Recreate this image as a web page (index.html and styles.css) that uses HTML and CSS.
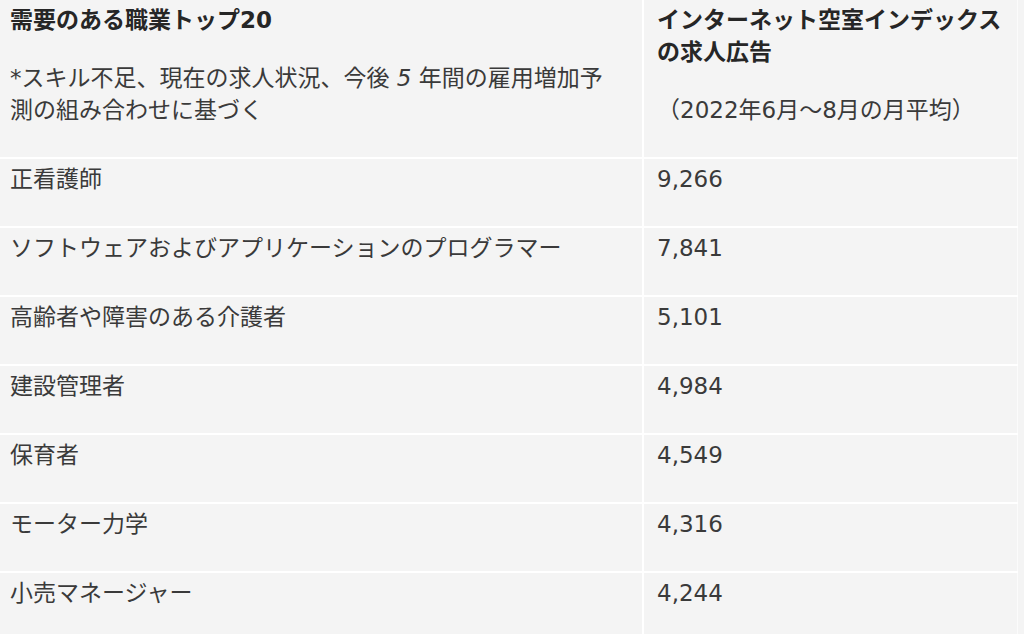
FILE: index.html
```html
<!DOCTYPE html>
<html lang="ja">
<head>
<meta charset="utf-8">
<title>需要のある職業トップ20</title>
<link rel="stylesheet" href="styles.css">
</head>
<body>
<table class="jobs">
  <colgroup><col class="col-job"><col class="col-ads"></colgroup>
  <thead>
    <tr>
      <th>
        <p class="title">需要のある職業トップ20</p>
        <p class="note">*スキル不足、現在の求人状況、今後 <em>5</em> 年間の雇用増加予測の組み合わせに基づく</p>
      </th>
      <th>
        <p class="title">インターネット空室インデックスの求人広告</p>
        <p class="note">（2022年6月～8月の月平均）</p>
      </th>
    </tr>
  </thead>
  <tbody>
    <tr><td><p>正看護師</p></td><td><p>9,266</p></td></tr>
    <tr><td><p>ソフトウェアおよびアプリケーションのプログラマー</p></td><td><p>7,841</p></td></tr>
    <tr><td><p>高齢者や障害のある介護者</p></td><td><p>5,101</p></td></tr>
    <tr><td><p>建設管理者</p></td><td><p>4,984</p></td></tr>
    <tr><td><p>保育者</p></td><td><p>4,549</p></td></tr>
    <tr><td><p>モーター力学</p></td><td><p>4,316</p></td></tr>
    <tr><td><p>小売マネージャー</p></td><td><p>4,244</p></td></tr>
  </tbody>
</table>
</body>
</html>
```
FILE: styles.css
```css
html, body {
  margin: 0;
  padding: 0;
  background: #f4f4f4;
}

body {
  font-family: "DejaVu Sans", "Noto Sans CJK JP", sans-serif;
  font-size: 23px;
  color: #3a3a3a;
}

.jobs {
  border-collapse: collapse;
  table-layout: fixed;
  width: 1018px;
  background: #f4f4f4;
}

.col-job { width: 643px; }

.jobs th,
.jobs td {
  text-align: left;
  vertical-align: top;
  font-weight: normal;
  padding: 4px 30px 0 10px;
  border-bottom: 2px solid #ffffff;
}

.jobs th + th,
.jobs td + td {
  border-left: 2px solid #ffffff;
  border-right: 1px solid #fbfbfb;
  padding-left: 13px;
  padding-right: 6px;
}

.jobs p {
  margin: 0 0 31px;
  line-height: 32px;
}

.jobs th .title {
  margin-bottom: 26px;
  font-weight: 700;
  color: #262626;
}

.jobs th .note {
  margin-bottom: 31px;
}

.jobs em {
  font-style: italic;
}
```
